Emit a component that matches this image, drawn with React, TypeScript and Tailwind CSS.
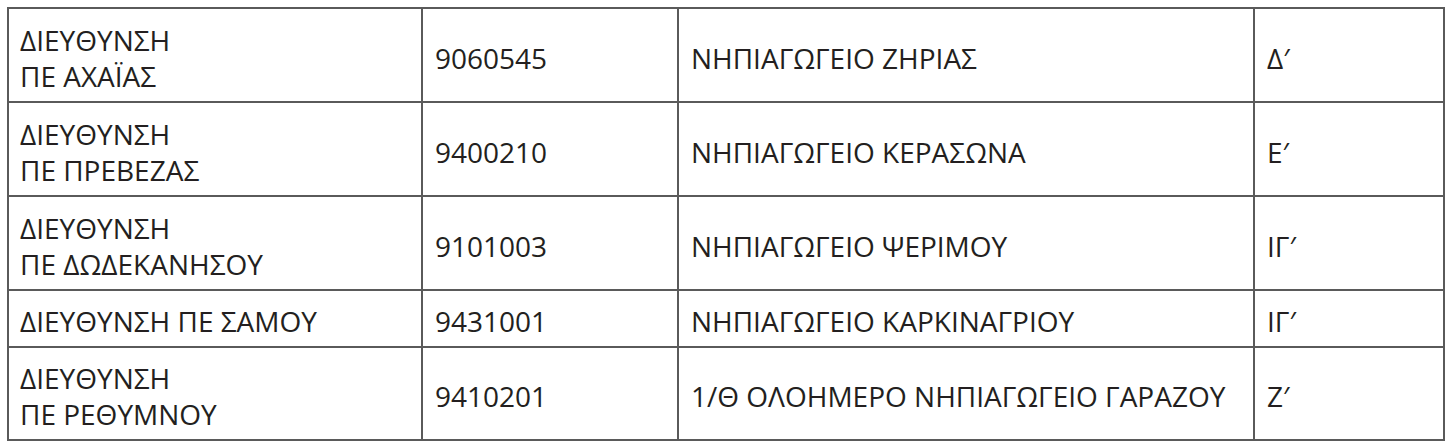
import React from "react";

const rows: { a: string[]; code: string; name: string; cls: string; h: string }[] = [
  { a: ["ΔΙΕΥΘΥΝΣΗ", "ΠΕ ΑΧΑΪΑΣ"], code: "9060545", name: "ΝΗΠΙΑΓΩΓΕΙΟ ΖΗΡΙΑΣ", cls: "Δ′", h: "h-[94px]" },
  { a: ["ΔΙΕΥΘΥΝΣΗ", "ΠΕ ΠΡΕΒΕΖΑΣ"], code: "9400210", name: "ΝΗΠΙΑΓΩΓΕΙΟ ΚΕΡΑΣΩΝΑ", cls: "Ε′", h: "h-[94px]" },
  { a: ["ΔΙΕΥΘΥΝΣΗ", "ΠΕ ΔΩΔΕΚΑΝΗΣΟΥ"], code: "9101003", name: "ΝΗΠΙΑΓΩΓΕΙΟ ΨΕΡΙΜΟΥ", cls: "ΙΓ′", h: "h-[94px]" },
  { a: ["ΔΙΕΥΘΥΝΣΗ ΠΕ ΣΑΜΟΥ"], code: "9431001", name: "ΝΗΠΙΑΓΩΓΕΙΟ ΚΑΡΚΙΝΑΓΡΙΟΥ", cls: "ΙΓ′", h: "h-[57px]" },
  { a: ["ΔΙΕΥΘΥΝΣΗ", "ΠΕ ΡΕΘΥΜΝΟΥ"], code: "9410201", name: "1/Θ ΟΛΟΗΜΕΡΟ ΝΗΠΙΑΓΩΓΕΙΟ ΓΑΡΑΖΟΥ", cls: "Ζ′", h: "h-[93px]" },
];

const cell = "border-r-2 border-b-2 border-[#5a5a5a] flex flex-col justify-center pt-[5px]";

export default function App() {
  return (
    <div className="w-[1454px] h-[444px] bg-white pt-[7px] pl-[7px] text-[#231f20] text-[28px] leading-[36px]" style={{ fontFamily: '"Open Sans", "Noto Sans", sans-serif' }}>
      <div className="grid grid-cols-[414px_256px_576px_190px] w-fit border-l-2 border-t-2 border-[#5a5a5a]">
        {rows.map((r, i) => (
          <React.Fragment key={i}>
            <div className={`${cell} ${r.h} pl-[11px]`}>
              {r.a.map((l, j) => (
                <div key={j}>{l}</div>
              ))}
            </div>
            <div className={`${cell} ${r.h} pl-[12px]`}>{r.code}</div>
            <div className={`${cell} ${r.h} pl-[12px]`}>{r.name}</div>
            <div className={`${cell} ${r.h} pl-[12px]`}>{r.cls}</div>
          </React.Fragment>
        ))}
      </div>
    </div>
  );
}
